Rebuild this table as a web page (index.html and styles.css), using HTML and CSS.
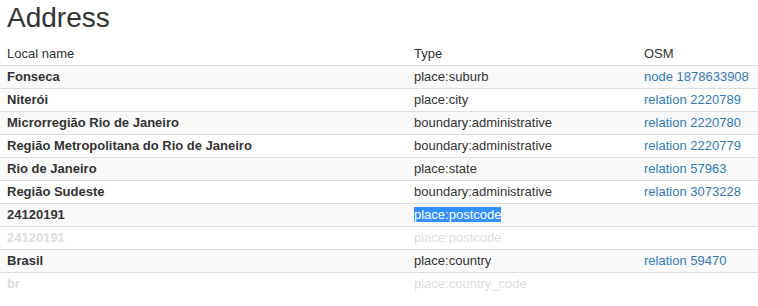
FILE: index.html
```html
<!DOCTYPE html>
<html lang="pt">
<head>
    <meta charset="UTF-8">
    <title>Address</title>
    <link rel="stylesheet" href="styles.css">
</head>
<body>
    <h1 class="title">Address</h1>
    <table class="address-table">
        <colgroup>
            <col class="col-name">
            <col class="col-type">
            <col class="col-osm">
        </colgroup>
        <thead>
            <tr>
                <th>Local name</th>
                <th>Type</th>
                <th>OSM</th>
            </tr>
        </thead>
        <tbody>
            <tr>
                <td class="name">Fonseca</td>
                <td>place:suburb</td>
                <td><a href="#">node 1878633908</a></td>
            </tr>
            <tr>
                <td class="name">Niterói</td>
                <td>place:city</td>
                <td><a href="#">relation 2220789</a></td>
            </tr>
            <tr>
                <td class="name">Microrregião Rio de Janeiro</td>
                <td>boundary:administrative</td>
                <td><a href="#">relation 2220780</a></td>
            </tr>
            <tr>
                <td class="name">Região Metropolitana do Rio de Janeiro</td>
                <td>boundary:administrative</td>
                <td><a href="#">relation 2220779</a></td>
            </tr>
            <tr>
                <td class="name">Rio de Janeiro</td>
                <td>place:state</td>
                <td><a href="#">relation 57963</a></td>
            </tr>
            <tr>
                <td class="name">Região Sudeste</td>
                <td>boundary:administrative</td>
                <td><a href="#">relation 3073228</a></td>
            </tr>
            <tr>
                <td class="name">24120191</td>
                <td><span class="selected">place:postcode</span></td>
                <td></td>
            </tr>
            <tr class="unused">
                <td class="name">24120191</td>
                <td>place:postcode</td>
                <td></td>
            </tr>
            <tr>
                <td class="name">Brasil</td>
                <td>place:country</td>
                <td><a href="#">relation 59470</a></td>
            </tr>
            <tr class="unused">
                <td class="name">br</td>
                <td>place:country_code</td>
                <td></td>
            </tr>
        </tbody>
    </table>
</body>
</html>
```

FILE: styles.css
```css
* {
    margin: 0;
    padding: 0;
    box-sizing: border-box;
}

body {
    font-family: "Liberation Sans", Arial, sans-serif;
    font-size: 13px;
    color: #333;
    background-color: #fff;
}

.title {
    font-size: 28px;
    font-weight: normal;
    line-height: 30px;
    padding: 3px 7px 0;
    margin-bottom: 10px;
}

.address-table {
    width: 100%;
    table-layout: fixed;
    border-collapse: collapse;
}

.col-name {
    width: 407px;
}

.col-type {
    width: 230px;
}

.address-table th,
.address-table td {
    text-align: left;
    font-weight: normal;
    line-height: 18px;
    padding: 2px 7px 2px;
    white-space: nowrap;
}

.address-table th {
    border-bottom: 1px solid #ddd;
}

.address-table td {
    border-top: 1px solid #ddd;
}

.address-table tbody tr:nth-child(odd) td {
    background-color: #f9f9f9;
}

.address-table td.name {
    font-weight: bold;
}

.address-table a {
    color: #337ab7;
    text-decoration: none;
}

.address-table .unused td {
    color: #ddd;
}

.selected {
    background-color: #3390ff;
    color: #fff;
}
```
